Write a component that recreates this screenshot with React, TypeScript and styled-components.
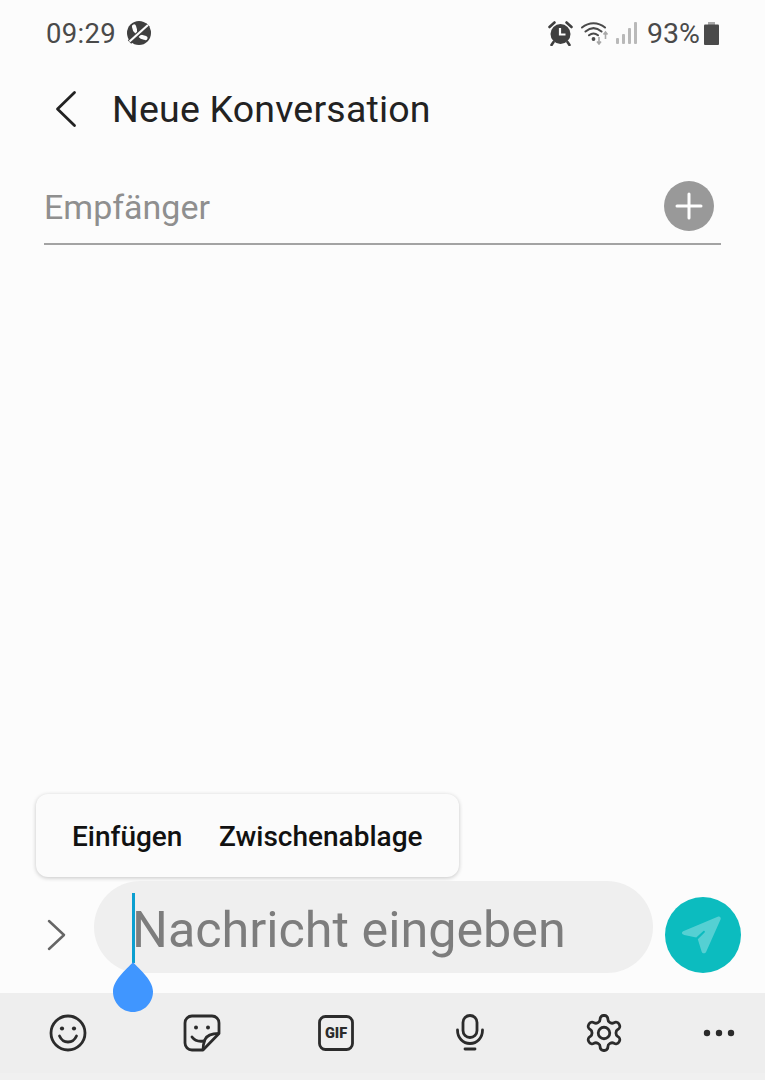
import React from "react";
import styled, { createGlobalStyle } from "styled-components";

const Global = createGlobalStyle`
  html, body { margin: 0; padding: 0; background: #fcfcfc; }
  #root { width: 765px; height: 1080px; overflow: hidden; }
`;

const Screen = styled.div`
  width: 765px;
  height: 1080px;
  display: flex;
  flex-direction: column;
  background: #fcfcfc;
  font-family: Roboto, "Liberation Sans", sans-serif;
  overflow: hidden;
`;

const StatusBar = styled.div`
  height: 66px;
  box-sizing: border-box;
  padding: 0 46px 0 46px;
  display: flex;
  align-items: center;
  justify-content: space-between;
  color: #4a4a4a;
  font-size: 27.5px;
`;

const StatusGroup = styled.div`
  display: flex;
  align-items: center;
`;

const Time = styled.span`
  margin-right: 10px;
  letter-spacing: 0.3px;
`;

const Percent = styled.span`
  margin: 0 4px 0 10px;
  font-size: 28.5px;
`;

const Header = styled.div`
  height: 86px;
  display: flex;
  align-items: center;
  padding-left: 50px;
  color: #222;
`;

const Title = styled.h1`
  margin: 0 0 0 30px;
  font-size: 37.5px;
  font-weight: 400;
  letter-spacing: 0.2px;
`;

const Recipient = styled.div`
  margin: 17px 44px 0;
  height: 76px;
  box-sizing: border-box;
  display: flex;
  align-items: center;
  justify-content: space-between;
  padding: 0 7px 0 0;
  border-bottom: 2px solid #a3a3a3;
  color: #8f8f8f;
  font-size: 34px;
`;

const RecipientLabel = styled.span`
  padding-top: 2px;
`;

const AddButton = styled.div`
  width: 50px;
  height: 50px;
  border-radius: 50%;
  background: #999;
  display: flex;
  align-items: center;
  justify-content: center;
`;

const Body = styled.div`
  flex: 1;
  display: flex;
  flex-direction: column;
  justify-content: flex-end;
  padding: 0 0 0 36px;
`;

const Menu = styled.div`
  width: 423px;
  height: 83px;
  box-sizing: border-box;
  margin-bottom: 4px;
  padding: 2px 0 0 36px;
  display: flex;
  align-items: center;
  gap: 36.500px;
  background: #fbfbfb;
  border-radius: 12px;
  box-shadow: 0 1px 4px rgba(0, 0, 0, 0.22);
  color: #111;
  font-size: 28px;
  font-weight: 500;
`;

const Composer = styled.div`
  height: 92px;
  margin-bottom: 20px;
  position: relative;
  display: flex;
  align-items: center;
  padding-left: 46px;
`;

const ChevronSlot = styled.div`
  display: flex;
  margin-top: 16px;
`;

const InputPill = styled.div`
  width: 559px;
  height: 92px;
  margin-left: 28px;
  box-sizing: border-box;
  padding: 5px 0 0 38px;
  border-radius: 46px;
  background: #efefef;
  display: flex;
  align-items: center;
  color: #7d7d7d;
  font-size: 50.300px;
  white-space: nowrap;
`;

const Cursor = styled.div`
  position: absolute;
  left: 132px;
  top: 12px;
  width: 3px;
  height: 70px;
  background: #0b9fd0;
`;

const Handle = styled.svg`
  position: absolute;
  left: 112px;
  top: 81px;
  z-index: 2;
`;

const SendButton = styled.div`
  width: 76px;
  height: 76px;
  margin: 16px 0 0 12px;
  border-radius: 50%;
  background: #0cbcbf;
  display: flex;
  align-items: center;
  justify-content: center;
`;

const Toolbar = styled.div`
  height: 87px;
  box-sizing: border-box;
  padding-left: 1px;
  display: grid;
  grid-template-columns: repeat(5, 134px) 96px;
  align-items: center;
  justify-items: center;
  background: #eeeeee;
  border-bottom: 7px solid #f0f0f0;
`;

const ToolSlot = styled.div`
  display: flex;
  justify-content: center;
`;

const GifText = styled.text`
  font-family: Roboto, "Liberation Sans", sans-serif;
  font-size: 14.5px;
  font-weight: 900;
  fill: #2b2b2b;
`;

const AlarmIcon = () => (
  <svg width="25" height="26" viewBox="0 0 25 26" fill="none">
    <circle cx="12.500" cy="14" r="10" fill="#3f3f3f" />
    <path d="M12 8v6.500h5.500" stroke="#fcfcfc" strokeWidth="2.200" />
    <path d="M1.500 7l5-4.500M23.500 7l-5-4.500M5.500 22l-2 3M19.500 22l2 3" stroke="#3f3f3f" strokeWidth="2.600" strokeLinecap="round" />
  </svg>
);

const MutedIcon = () => (
  <svg width="26" height="26" viewBox="0 0 26 26" fill="none">
    <circle cx="13" cy="13" r="12" fill="#3f3f3f" />
    <path d="M8.500 7.500c.5 5 4 9 9.500 10.500" stroke="#fcfcfc" strokeWidth="2.600" />
    <path d="M8 6.500l1 3.500M19.500 18l-3.500-1" stroke="#fcfcfc" strokeWidth="4.200" strokeLinecap="round" />
    <path d="M3.500 22L22 5" stroke="#3f3f3f" strokeWidth="5" />
    <path d="M3.500 21.500L22 5" stroke="#fcfcfc" strokeWidth="2.200" />
  </svg>
);

const WifiIcon = () => (
  <svg width="30" height="24" viewBox="0 0 30 24" fill="none" style={{ marginLeft: 8 }}>
    <path d="M1 6.500C8 .7 17 .7 24 6.500M4.500 10.500C9.500 6.300 15.500 6.300 20.500 10.500M8 14.300c3-2.400 6-2.400 9 0" stroke="#4a4a4a" strokeWidth="2" strokeLinecap="round" />
    <circle cx="12.500" cy="18" r="1.900" fill="#4a4a4a" />
    <path d="M18 16v7M16 20.500l2 2.500 2-2.500" stroke="#a8a8a8" strokeWidth="1.600" />
    <path d="M24.500 11v7M22.500 13.500l2-2.500 2 2.500" stroke="#a8a8a8" strokeWidth="1.600" />
  </svg>
);

const SignalIcon = () => (
  <svg width="21" height="22" viewBox="0 0 21 22" fill="#b9b9b9" style={{ marginLeft: 5 }}>
    <rect x="0" y="16" width="3" height="6" rx="1" />
    <rect x="6" y="12" width="3" height="10" rx="1" />
    <rect x="12" y="6" width="3" height="16" rx="1" />
    <rect x="18" y="0" width="3" height="22" rx="1" />
  </svg>
);

const BatteryIcon = () => (
  <svg width="15" height="23" viewBox="0 0 15 23" fill="none">
    <rect x="4" y="0" width="7" height="3" fill="#a8a8a8" />
    <rect x="0" y="2.500" width="15" height="20.500" rx="1" fill="#4a4a4a" />
  </svg>
);

const BackIcon = () => (
  <svg width="32" height="40" viewBox="0 0 32 40" fill="none">
    <path d="M24.500 3.500L7.500 20l17 16.500" stroke="#222" strokeWidth="2.800" strokeLinecap="round" strokeLinejoin="round" />
  </svg>
);

const PlusIcon = () => (
  <svg width="28" height="28" viewBox="0 0 28 28" fill="none">
    <path d="M14 2v24M2 14h24" stroke="#fff" strokeWidth="3" strokeLinecap="round" />
  </svg>
);

const ChevronIcon = () => (
  <svg width="20" height="32" viewBox="0 0 20 32" fill="none">
    <path d="M3 2l15 14L3 30" stroke="#666" strokeWidth="2.500" strokeLinecap="round" strokeLinejoin="round" />
  </svg>
);

const SendIcon = () => (
  <svg width="44" height="44" viewBox="0 0 42 42" fill="none" style={{ marginLeft: -2 }}>
    <path d="M3 17.500L36 3.500c2-.8 3.500.8 2.700 2.700L25 37c-1 2-3.500 2-4.300 0l-3.700-12 6.500-6.500c.8-.8-.300-2-1.200-1.200L15.500 23.500 4 21c-2.300-.6-2.800-2.600-1-3.500z" fill="#55d0d3" />
  </svg>
);

const SmileIcon = () => (
  <svg width="38" height="38" viewBox="0 0 38 38" fill="none">
    <circle cx="19" cy="19" r="17" stroke="#2b2b2b" strokeWidth="2.800" />
    <circle cx="13" cy="14.500" r="2.100" fill="#2b2b2b" />
    <circle cx="25" cy="14.500" r="2.100" fill="#2b2b2b" />
    <path d="M10.500 22c2 4.500 5 6 8.500 6s6.500-1.500 8.500-6" stroke="#2b2b2b" strokeWidth="2.800" strokeLinecap="round" />
  </svg>
);

const StickerIcon = () => (
  <svg width="38" height="38" viewBox="0 0 38 38" fill="none">
    <path d="M20 36H9a7 7 0 0 1-7-7V9a7 7 0 0 1 7-7h20a7 7 0 0 1 7 7v10.500z" stroke="#2b2b2b" strokeWidth="2.800" strokeLinejoin="round" />
    <path d="M20 36c0-3.500.5-7 2-10.500 1.500-3.500 5-6 14-6" stroke="#2b2b2b" strokeWidth="2.800" />
    <circle cx="13" cy="13.500" r="2" fill="#2b2b2b" />
    <circle cx="25" cy="13.500" r="2" fill="#2b2b2b" />
    <path d="M9 23c2.500 3.500 6 5 12 4" stroke="#2b2b2b" strokeWidth="2.800" strokeLinecap="round" />
  </svg>
);

const GifIcon = () => (
  <svg width="36" height="36" viewBox="0 0 36 36" fill="none">
    <rect x="1.500" y="1.500" width="33" height="33" rx="6" stroke="#2b2b2b" strokeWidth="2.800" />
    <GifText x="18" y="23" textAnchor="middle">GIF</GifText>
  </svg>
);

const MicIcon = () => (
  <svg width="30" height="38" viewBox="0 0 30 38" fill="none">
    <rect x="8" y="1.500" width="14" height="22" rx="7" stroke="#2b2b2b" strokeWidth="2.800" />
    <path d="M2.500 16c0 8 5.500 13.500 12.500 13.500S27.500 24 27.500 16" stroke="#2b2b2b" strokeWidth="2.800" strokeLinecap="round" />
    <path d="M10 35h10" stroke="#2b2b2b" strokeWidth="2.800" strokeLinecap="round" />
  </svg>
);

const GearIcon = () => (
  <svg width="42" height="42" viewBox="0 0 24 24" fill="none" stroke="#2b2b2b" strokeWidth="1.600" strokeLinecap="round" strokeLinejoin="round">
    <path d="M12.220 2h-.44a2 2 0 0 0-2 2v.18a2 2 0 0 1-1 1.730l-.43.250a2 2 0 0 1-2 0l-.150-.080a2 2 0 0 0-2.730.730l-.220.380a2 2 0 0 0 .730 2.730l.150.100a2 2 0 0 1 1 1.720v.510a2 2 0 0 1-1 1.740l-.150.090a2 2 0 0 0-.730 2.730l.220.380a2 2 0 0 0 2.730.730l.150-.080a2 2 0 0 1 2 0l.430.250a2 2 0 0 1 1 1.730V20a2 2 0 0 0 2 2h.440a2 2 0 0 0 2-2v-.180a2 2 0 0 1 1-1.730l.430-.250a2 2 0 0 1 2 0l.150.080a2 2 0 0 0 2.730-.730l.220-.390a2 2 0 0 0-.730-2.730l-.150-.080a2 2 0 0 1-1-1.740v-.500a2 2 0 0 1 1-1.740l.150-.090a2 2 0 0 0 .730-2.730l-.220-.380a2 2 0 0 0-2.730-.730l-.150.080a2 2 0 0 1-2 0l-.430-.250a2 2 0 0 1-1-1.730V4a2 2 0 0 0-2-2z" />
    <circle cx="12" cy="12" r="3.300" />
  </svg>
);

const DotsIcon = () => (
  <svg width="32" height="8" viewBox="0 0 32 8" fill="#2b2b2b">
    <circle cx="4" cy="4" r="3.200" />
    <circle cx="16" cy="4" r="3.200" />
    <circle cx="28" cy="4" r="3.200" />
  </svg>
);

export default function App() {
  return (
    <Screen>
      <Global />
      <StatusBar>
        <StatusGroup>
          <Time>09:29</Time>
          <MutedIcon />
        </StatusGroup>
        <StatusGroup>
          <AlarmIcon />
          <WifiIcon />
          <SignalIcon />
          <Percent>93%</Percent>
          <BatteryIcon />
        </StatusGroup>
      </StatusBar>
      <Header>
        <BackIcon />
        <Title>Neue Konversation</Title>
      </Header>
      <Recipient>
        <RecipientLabel>Empfänger</RecipientLabel>
        <AddButton>
          <PlusIcon />
        </AddButton>
      </Recipient>
      <Body>
        <Menu>
          <span>Einfügen</span>
          <span>Zwischenablage</span>
        </Menu>
      </Body>
      <Composer>
        <ChevronSlot>
          <ChevronIcon />
        </ChevronSlot>
        <InputPill>Nachricht eingeben</InputPill>
        <SendButton>
          <SendIcon />
        </SendButton>
        <Cursor />
        <Handle width="42" height="50" viewBox="0 0 42 50">
          <path d="M21 0c3 4.500 20 17 20 29.500C41 41 32 50 21 50S1 41 1 29.500C1 17 18 4.500 21 0z" fill="#4096ff" />
        </Handle>
      </Composer>
      <Toolbar>
        <ToolSlot><SmileIcon /></ToolSlot>
        <ToolSlot><StickerIcon /></ToolSlot>
        <ToolSlot><GifIcon /></ToolSlot>
        <ToolSlot><MicIcon /></ToolSlot>
        <ToolSlot><GearIcon /></ToolSlot>
        <ToolSlot><DotsIcon /></ToolSlot>
      </Toolbar>
    </Screen>
  );
}
